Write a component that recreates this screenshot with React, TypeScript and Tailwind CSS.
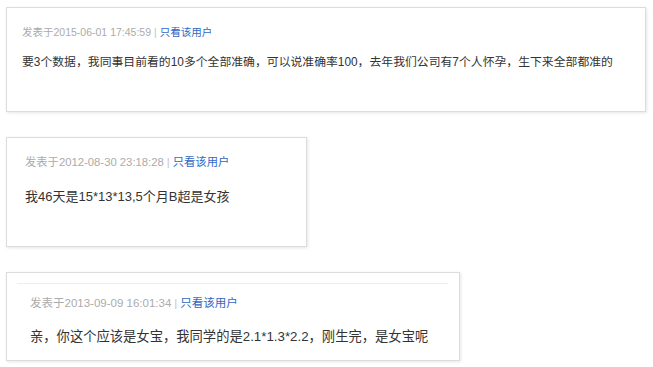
import React from 'react';

type Post = {
    time: string;
    text: string;
};

const font = { fontFamily: '"Liberation Sans", Arial, "Noto Sans CJK SC", sans-serif' };

const Meta: React.FC<{ time: string; size: string }> = ({ time, size }) => (
    <div className={`${size} leading-[16px] text-[#ababab] whitespace-nowrap`}>
        发表于{time}
        <span className="mx-[3px] text-[#c4c4c4]">|</span>
        <a href="#" className="text-[#3168c4]">只看该用户</a>
    </div>
);

const posts: Post[] = [
    {
        time: '2015-06-01 17:45:59',
        text: '要3个数据，我同事目前看的10多个全部准确，可以说准确率100，去年我们公司有7个人怀孕，生下来全部都准的',
    },
    { time: '2012-08-30 23:18:28', text: '我46天是15*13*13,5个月B超是女孩' },
    { time: '2013-09-09 16:01:34', text: '亲，你这个应该是女宝，我同学的是2.1*1.3*2.2，刚生完，是女宝呢' },
];

export default function App() {
    return (
        <div className="w-[653px] h-[367px] bg-white pl-[6px] pt-[7px] flex flex-col gap-[25px]" style={font}>
            {/* first reply */}
            <div className="w-[640px] h-[105px] border border-[#dcdcdc] bg-white shadow-[1px_1px_3px_rgba(0,0,0,0.1)] pl-[15px] pt-[16px]">
                <Meta time={posts[0].time} size="text-[10.5px]" />
                <p className="mt-[12px] text-[11.85px] leading-[20px] text-[#333] whitespace-nowrap">{posts[0].text}</p>
            </div>

            {/* second reply */}
            <div className="w-[301px] h-[110px] border border-[#dcdcdc] bg-white shadow-[1px_1px_3px_rgba(0,0,0,0.1)] pl-[18px] pt-[16px]">
                <Meta time={posts[1].time} size="text-[11.3px]" />
                <p className="mt-[17px] text-[13px] leading-[20px] text-[#333] whitespace-nowrap">{posts[1].text}</p>
            </div>

            {/* third reply */}
            <div className="w-[454px] h-[89px] border border-[#dcdcdc] bg-white shadow-[1px_1px_3px_rgba(0,0,0,0.1)] pt-[10px] pl-[10px] pr-[11px]">
                <div className="border-t border-[#e6f0f2] pl-[13px] pt-[11px]">
                    <Meta time={posts[2].time} size="text-[11.5px]" />
                    <p className="mt-[16px] text-[13.3px] leading-[20px] text-[#333] whitespace-nowrap">{posts[2].text}</p>
                </div>
            </div>
        </div>
    );
}
